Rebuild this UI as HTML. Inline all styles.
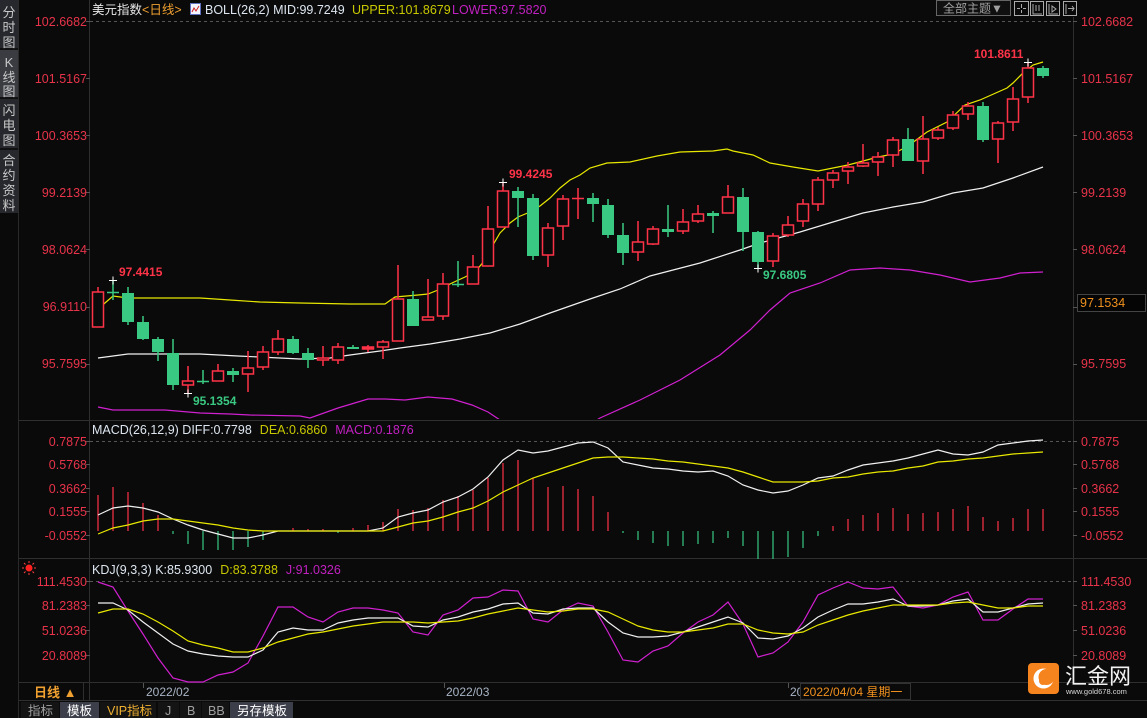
<!DOCTYPE html>
<html><head><meta charset="utf-8"><style>
html,body{margin:0;padding:0;background:#0a0a0a;width:1147px;height:718px;overflow:hidden}
svg{display:block}
text{font-family:"Liberation Sans","Noto Sans CJK SC",sans-serif}
</style></head><body>
<svg width="1147" height="718" viewBox="0 0 1147 718" xmlns="http://www.w3.org/2000/svg">
<defs>
<clipPath id="cm"><rect x="90" y="17" width="983" height="402"/></clipPath>
</defs>
<rect width="1147" height="718" fill="#0a0a0a"/>
<!-- sidebar -->
<rect x="0" y="0" width="18" height="213" fill="#26282d"/>
<rect x="0" y="50" width="18" height="47" fill="#3a3c42"/>
<rect x="0" y="48" width="18" height="2" fill="#111"/>
<rect x="0" y="97" width="18" height="2" fill="#111"/>
<rect x="0" y="148" width="18" height="2" fill="#111"/>
<rect x="18" y="0" width="1" height="718" fill="#2a2a2a"/>
<g fill="#c8c8c8" font-size="13" text-anchor="middle">
<text x="9" y="17">分</text><text x="9" y="32">时</text><text x="9" y="47">图</text>
<text x="9" y="67">K</text><text x="9" y="82">线</text><text x="9" y="96">图</text>
<text x="9" y="115">闪</text><text x="9" y="130">电</text><text x="9" y="145">图</text>
<text x="9" y="165">合</text><text x="9" y="180">约</text><text x="9" y="195">资</text><text x="9" y="210">料</text>
</g>
<!-- axes -->
<line x1="89.5" y1="0" x2="89.5" y2="700" stroke="#2f2f2f"/>
<line x1="1073.5" y1="17" x2="1073.5" y2="683" stroke="#2f2f2f"/>
<line x1="19" y1="420.5" x2="1147" y2="420.5" stroke="#2f2f2f"/>
<line x1="19" y1="558.5" x2="1147" y2="558.5" stroke="#2f2f2f"/>
<line x1="19" y1="682.5" x2="1147" y2="682.5" stroke="#2f2f2f"/>
<line x1="19" y1="700.5" x2="1147" y2="700.5" stroke="#2f2f2f"/>
<g stroke="#555" stroke-dasharray="3,3">
<line x1="90" y1="21.5" x2="1073" y2="21.5"/>
<line x1="90" y1="441.5" x2="1073" y2="441.5"/>
<line x1="90" y1="581.5" x2="1073" y2="581.5"/>
</g>
<g stroke="#555">
<path d="M86 21.5h4M86 78.5h4M86 135.5h4M86 192.5h4M86 249.5h4M86 307.5h4M86 364.5h4M86 441.5h4M86 464.5h4M86 488.5h4M86 511.5h4M86 535.5h4M86 581.5h4M86 605.5h4M86 630.5h4M86 655.5h4"/>
<path d="M1073 21.5h4M1073 78.5h4M1073 135.5h4M1073 192.5h4M1073 249.5h4M1073 307.5h4M1073 364.5h4M1073 441.5h4M1073 464.5h4M1073 488.5h4M1073 511.5h4M1073 535.5h4M1073 581.5h4M1073 605.5h4M1073 630.5h4M1073 655.5h4"/>
</g>
<!-- axis labels -->
<g fill="#e8334a" font-size="12.5">
<g text-anchor="end">
<text x="87" y="26">102.6682</text><text x="87" y="83">101.5167</text><text x="87" y="140">100.3653</text><text x="87" y="197">99.2139</text><text x="87" y="254">98.0624</text><text x="87" y="311">96.9110</text><text x="87" y="368">95.7595</text>
<text x="87" y="446">0.7875</text><text x="87" y="469">0.5768</text><text x="87" y="493">0.3662</text><text x="87" y="516">0.1555</text><text x="87" y="540">-0.0552</text>
<text x="87" y="586">111.4530</text><text x="87" y="610">81.2383</text><text x="87" y="635">51.0236</text><text x="87" y="660">20.8089</text>
</g>
<text x="1081" y="26">102.6682</text><text x="1081" y="83">101.5167</text><text x="1081" y="140">100.3653</text><text x="1081" y="197">99.2139</text><text x="1081" y="254">98.0624</text><text x="1081" y="368">95.7595</text>
<text x="1081" y="446">0.7875</text><text x="1081" y="469">0.5768</text><text x="1081" y="493">0.3662</text><text x="1081" y="516">0.1555</text><text x="1081" y="540">-0.0552</text>
<text x="1081" y="586">111.4530</text><text x="1081" y="610">81.2383</text><text x="1081" y="635">51.0236</text><text x="1081" y="660">20.8089</text>
</g>
<rect x="1077.5" y="294.5" width="68" height="17" fill="#050505" stroke="#444"/>
<text x="1080" y="307" fill="#f0901e" font-size="12.5">97.1534</text>
<!-- header -->
<text x="92" y="14" font-size="12.5"><tspan fill="#e8e8e8">美元指数</tspan><tspan fill="#f0a030">&lt;日线&gt;</tspan></text>
<rect x="190.5" y="3.5" width="10" height="11" fill="#f4f4ff" stroke="#6070c0"/>
<path d="M192 12l2-4 2 3 3-5" stroke="#d02020" fill="none" stroke-width="1"/>
<text x="205" y="14" font-size="12.5" fill="#dde6f0">BOLL(26,2) MID:99.7249</text>
<text x="352" y="14" font-size="12.5" fill="#c8c800">UPPER:101.8679</text>
<text x="452" y="14" font-size="12.5" fill="#c020c0">LOWER:97.5820</text>
<rect x="936.5" y="0.5" width="74" height="15" fill="#101010" stroke="#666"/>
<text x="943" y="12.5" fill="#a0a0a0" font-size="12">全部主题▼</text>
<g fill="none" stroke="#aaa">
<rect x="1014.5" y="1.5" width="14" height="14"/><path d="M1021.5 4v4M1021.5 10v3M1017 8.5h3M1023 8.5h3"/>
<rect x="1030.5" y="1.5" width="13" height="14"/><path d="M1033 4v10h9M1036 5v6M1039 5v6"/>
<rect x="1046.5" y="1.5" width="13" height="14"/><path d="M1049 4v10h9M1052 6l4 3-4 3z"/>
<rect x="1063.5" y="1.5" width="13" height="14"/><path d="M1066 4v10M1068 8.5h6M1072 6l2 2.5-2 2.5"/>
</g>
<!-- main chart -->
<g clip-path="url(#cm)" fill="none" stroke-width="1.2">
<polyline stroke="#e8e800" points="98,309 113,296 128,298 200,298 230,300 260,302 300,303 350,304 385,304 395,297 418,295 428,294 438,290 452,283 465,277 475,272 485,260 490,250 500,233 510,223 518,217 530,212 540,206 550,198 560,188 570,180 580,175 590,168 607,163 630,162 657,156 680,152 713,151 727,149 733,151 753,155 770,163 793,167 818,171 833,168 848,165 863,161 878,157 893,154 908,146 927,132 947,122 965,105 980,100 1007,88 1013,83 1023,73 1033,65 1043,62"/>
<polyline stroke="#f0f0f0" points="98,358 113,356 128,354 200,354 238,356 300,359 330,358 350,355 380,351 400,348 430,344 460,339 490,333 520,324 550,313 590,299 620,289 650,276 700,263 740,250 760,243 800,232 833,222 863,213 893,207 923,202 953,193 983,188 1013,178 1043,167"/>
<polyline stroke="#d020d0" points="98,407 113,410 165,410 200,413 230,414 250,415 300,416 310,418 338,408 368,399 385,399 405,400 428,397 452,399 472,405 488,412 500,420 520,428 560,432 590,424 600,418 640,400 680,380 720,355 750,330 770,310 790,293 820,283 850,270 880,268 910,270 940,275 970,282 1000,278 1020,273 1043,272"/>
</g>
<!-- candles red -->
<g stroke="#ff3348" stroke-width="1.5" fill="#0a0a0a">
<path d="M98 287V327M188 366V394M218 364V381M248 351V392M263 346V370M278 330V355M323 346V366M338 343V364M368 345V352M383 340V359M398 265V341M428 279V320M443 273V320M473 255V284M488 206V266M503 182V227M548 223V267M563 195V240M578 188V219M638 221V261M653 226V245M683 209V234M698 205V223M728 185V213M773 233V267M788 216V237M803 199V227M818 177V211M833 170V188M848 162V184M863 144V167M878 152V176M893 137V167M923 116V174M938 127V140M953 111V130M968 102V120M998 121V163M1013 87V131M1028 62V103"/>
<rect x="92.5" y="292" width="11" height="35"/>
<rect x="182.5" y="381" width="11" height="4"/>
<rect x="212.5" y="371" width="11" height="10"/>
<rect x="242.5" y="368" width="11" height="6"/>
<rect x="257.5" y="352" width="11" height="15"/>
<rect x="272.5" y="339" width="11" height="13"/>
<rect x="317.5" y="358" width="11" height="2"/>
<rect x="332.5" y="347" width="11" height="13"/>
<rect x="362.5" y="347" width="11" height="2" fill="#ff3348"/>
<rect x="377.5" y="342" width="11" height="5"/>
<rect x="392.5" y="299" width="11" height="42"/>
<rect x="422.5" y="317" width="11" height="3"/>
<rect x="437.5" y="284" width="11" height="32"/>
<rect x="467.5" y="267" width="11" height="17"/>
<rect x="482.5" y="229" width="11" height="37"/>
<rect x="497.5" y="191" width="11" height="36"/>
<rect x="542.5" y="228" width="11" height="27"/>
<rect x="557.5" y="199" width="11" height="27"/>
<path d="M572 198.5h12"/>
<rect x="632.5" y="242" width="11" height="10"/>
<rect x="647.5" y="229" width="11" height="15"/>
<rect x="677.5" y="222" width="11" height="9"/>
<rect x="692.5" y="214" width="11" height="7"/>
<rect x="722.5" y="197" width="11" height="16"/>
<rect x="767.5" y="236" width="11" height="25"/>
<rect x="782.5" y="225" width="11" height="10"/>
<rect x="797.5" y="204" width="11" height="17"/>
<rect x="812.5" y="180" width="11" height="24"/>
<rect x="827.5" y="173" width="11" height="7"/>
<rect x="842.5" y="167" width="11" height="4"/>
<rect x="857.5" y="163" width="11" height="3"/>
<rect x="872.5" y="157" width="11" height="5"/>
<rect x="887.5" y="140" width="11" height="15"/>
<rect x="917.5" y="139" width="11" height="22"/>
<rect x="932.5" y="130" width="11" height="8"/>
<rect x="947.5" y="115" width="11" height="13"/>
<rect x="962.5" y="106" width="11" height="8"/>
<rect x="992.5" y="123" width="11" height="16"/>
<rect x="1007.5" y="99" width="11" height="23"/>
<rect x="1022.5" y="68" width="11" height="29"/>
</g>
<!-- candles green -->
<g stroke="#3ac982" stroke-width="1.5" fill="#3ac982">
<path d="M113 280V300M107 292.5h12M128 287V325M143 316V340M158 337V361M173 339V390M203 370V384M197 381.5h12M233 368V382M293 336V354M308 348V368M353 345V349M413 291V326M458 261V287M452 284.5h12M518 187V227M533 194V260M593 193V222M608 199V238M623 223V265M668 205V237M713 211V233M743 188V251M758 231V268M908 128V161M983 102V142M1043 66V78"/>
</g>
<g fill="#3ac982">
<rect x="122" y="293" width="12" height="29"/>
<rect x="137" y="322" width="12" height="17"/>
<rect x="152" y="339" width="12" height="13"/>
<rect x="167" y="353" width="12" height="32"/>
<rect x="227" y="371" width="12" height="4"/>
<rect x="287" y="339" width="12" height="14"/>
<rect x="302" y="353" width="12" height="7"/>
<rect x="347" y="347" width="12" height="2"/>
<rect x="407" y="299" width="12" height="27"/>
<rect x="512" y="191" width="12" height="7"/>
<rect x="527" y="198" width="12" height="58"/>
<rect x="587" y="198" width="12" height="6"/>
<rect x="602" y="205" width="12" height="30"/>
<rect x="617" y="235" width="12" height="18"/>
<rect x="662" y="229" width="12" height="3"/>
<rect x="707" y="213" width="12" height="3"/>
<rect x="737" y="197" width="12" height="35"/>
<rect x="752" y="232" width="12" height="30"/>
<rect x="902" y="139" width="12" height="22"/>
<rect x="977" y="106" width="12" height="34"/>
<rect x="1037" y="68" width="12" height="8"/>
</g>
<!-- markers -->
<g stroke="#fff" stroke-width="1">
<path d="M109 280.5h8M113 276.5v8M184 393.5h8M188 389.5v8M499 182.5h8M503 178.5v8M754 268.5h8M758 264.5v8M1024 62.5h8M1028 58.5v8"/>
</g>
<g font-size="12" font-weight="bold">
<text x="119" y="276" fill="#ff3348">97.4415</text>
<text x="193" y="405" fill="#3ac982">95.1354</text>
<text x="509" y="178" fill="#ff3348">99.4245</text>
<text x="763" y="279" fill="#3ac982">97.6805</text>
<text x="974" y="58" fill="#ff3348">101.8611</text>
</g>
<!-- MACD -->
<text x="92" y="434" font-size="12.5"><tspan fill="#dde6f0">MACD(26,12,9) DIFF:0.7798</tspan><tspan fill="#c8c800" dx="8">DEA:0.6860</tspan><tspan fill="#c020c0" dx="8">MACD:0.1876</tspan></text>
<g stroke="#ff3348" stroke-width="1.2">
<path d="M98 531V495M113 531V487M128 531V492M143 531V503M158 531V515M293 531V528M308 531V529M323 531V529M353 531V528M368 531V525M383 531V522M398 531V509M413 531V510M428 531V508M443 531V500M458 531V496M473 531V490M488 531V478M503 531V463M518 531V460M533 531V478M548 531V487M563 531V486M578 531V489M593 531V496M608 531V512M833 531V526M848 531V519M863 531V515M878 531V513M893 531V508M908 531V514M923 531V513M938 531V512M953 531V509M968 531V506M983 531V517M998 531V521M1013 531V518M1028 531V509M1043 531V509"/>
</g>
<g stroke="#3ac982" stroke-width="1.2">
<path d="M173 531V534M188 531V544M203 531V550M218 531V550M233 531V550M248 531V547M263 531V540M338 531V533M623 531V533M638 531V540M653 531V543M668 531V546M683 531V546M698 531V544M713 531V543M728 531V538M743 531V546M758 531V559M773 531V559M788 531V557M803 531V548M818 531V536"/>
</g>
<g fill="none" stroke-width="1.2">
<polyline stroke="#f0f0f0" points="98,515 113,508 128,506 143,508 158,512 173,519 188,525 203,530 218,534 233,538 248,538 263,535 278,531 368,531 383,528 398,517 413,513 428,510 443,502 458,497 473,489 488,477 503,460 518,450 533,453 548,451 563,447 578,443 593,442 608,448 623,462 638,465 653,468 668,469 683,471 698,472 713,471 728,476 743,485 758,490 773,493 788,491 803,485 818,478 833,476 848,470 863,465 878,463 893,461 908,458 923,454 938,450 953,454 968,455 983,452 998,445 1013,443 1028,441 1043,440"/>
<polyline stroke="#e8e800" points="98,534 113,528 128,525 143,521 158,519 173,519 188,521 203,523 218,525 233,528 248,530 263,531 383,531 398,527 413,523 428,521 443,517 458,512 473,508 488,501 503,492 518,485 533,478 548,473 563,468 578,463 593,458 608,457 623,457 638,458 653,459 668,461 683,462 698,464 713,466 728,468 743,472 758,477 773,482 788,482 803,482 818,481 833,478 848,477 863,474 878,472 893,471 908,468 923,466 938,462 953,461 968,459 983,458 998,456 1013,454 1028,453 1043,452"/>
</g>
<!-- KDJ -->
<circle cx="29" cy="568" r="3.5" fill="#ff2020"/>
<g stroke="#ff4040" stroke-width="1"><path d="M29 561v2M29 573v2M22 568h2M34 568h2M24 563l1.5 1.5M34 563l-1.5 1.5M24 573l1.5-1.5M34 573l-1.5-1.5"/></g>
<text x="92" y="574" font-size="12.5"><tspan fill="#dde6f0">KDJ(9,3,3) K:85.9300</tspan><tspan fill="#c8c800" dx="8">D:83.3788</tspan><tspan fill="#c020c0" dx="8">J:91.0326</tspan></text>
<g fill="none" stroke-width="1.2">
<polyline stroke="#d020d0" points="98,582 113,587 128,611 143,634 158,658 173,678 188,682 203,682 218,675 233,672 248,663 263,636 278,607 293,607 308,617 323,622 338,612 353,608 368,608 383,610 398,613 413,632 428,635 443,615 458,610 473,598 488,597 503,590 518,591 533,619 548,622 563,610 578,603 593,606 608,632 623,660 638,662 653,651 668,646 683,633 698,622 713,615 728,602 743,624 758,657 773,653 788,642 803,622 818,595 833,588 848,582 863,588 878,589 893,587 908,606 923,608 938,605 953,597 968,592 983,620 998,620 1013,609 1028,599 1043,599"/>
<polyline stroke="#f0f0f0" points="98,603 113,603 128,610 143,622 158,633 173,644 188,651 203,654 218,656 233,657 248,657 263,650 278,632 293,628 308,630 323,630 338,623 353,620 368,618 383,618 398,618 413,626 428,627 443,620 458,617 473,612 488,609 503,604 518,603 533,613 548,614 563,609 578,608 593,608 608,622 623,633 638,637 653,637 668,636 683,632 698,627 713,622 728,617 743,623 758,638 773,639 788,636 803,628 818,617 833,610 848,604 863,604 878,602 893,599 908,606 923,606 938,605 953,601 968,599 983,612 998,612 1013,608 1028,604 1043,603"/>
<polyline stroke="#e8e800" points="98,613 113,609 128,609 143,614 158,622 173,631 188,641 203,645 218,648 233,652 248,652 263,648 278,642 293,638 308,634 323,632 338,629 353,626 368,624 383,622 398,622 413,622 428,623 443,622 458,621 473,618 488,614 503,611 518,608 533,610 548,612 563,611 578,609 593,609 608,612 623,619 638,626 653,630 668,632 683,632 698,630 713,628 728,624 743,624 758,630 773,633 788,634 803,632 818,625 833,620 848,615 863,611 878,608 893,605 908,605 923,605 938,605 953,603 968,602 983,605 998,608 1013,608 1028,606 1043,606"/>
</g>
<!-- date row -->
<line x1="83.5" y1="683" x2="83.5" y2="700" stroke="#2f2f2f"/>
<text x="34" y="697" fill="#f0a030" font-size="13" font-weight="bold">日线 ▲</text>
<line x1="143.5" y1="683" x2="143.5" y2="688" stroke="#555"/>
<line x1="444.5" y1="683" x2="444.5" y2="688" stroke="#555"/>
<line x1="788.5" y1="683" x2="788.5" y2="688" stroke="#555"/>
<g fill="#a8b4c4" font-size="12">
<text x="146" y="696">2022/02</text>
<text x="446" y="696">2022/03</text>
<text x="790" y="696">20</text>
</g>
<rect x="800.5" y="683.5" width="110" height="16" fill="#0a0a0a" stroke="#333"/>
<text x="803" y="696" fill="#f0901e" font-size="12">2022/04/04 星期一</text>
<!-- logo -->
<rect x="1028" y="663" width="31" height="31" rx="4" fill="#f5841f"/>
<circle cx="1043.5" cy="678.5" r="10" fill="#fff"/>
<circle cx="1046.5" cy="677" r="8" fill="#f5841f"/>
<circle cx="1043" cy="681" r="4" fill="#f5841f"/>
<text x="1065" y="684" fill="#f2f2f2" font-size="22">汇金网</text>
<text x="1066" y="694" fill="#d8d8d8" font-size="7.5">www.gold678.com</text>
<!-- tabs -->
<rect x="19" y="701" width="1128" height="17" fill="#0a0a0a"/>
<rect x="21" y="702" width="38" height="16" fill="#141414"/>
<rect x="60" y="702" width="39" height="16" fill="#3c3f4a"/>
<rect x="100" y="702" width="56" height="16" fill="#141414"/>
<rect x="158" y="702" width="21" height="16" fill="#141414"/>
<rect x="180" y="702" width="21" height="16" fill="#141414"/>
<rect x="202" y="702" width="27" height="16" fill="#141414"/>
<rect x="230" y="702" width="63" height="16" fill="#3c3f4a"/>
<g font-size="12.5">
<text x="28" y="715" fill="#a0a0a0">指标</text>
<text x="67" y="715" fill="#ffffff">模板</text>
<text x="107" y="715" fill="#f0b030">VIP指标</text>
<text x="165" y="715" fill="#a0a0a0">J</text>
<text x="187" y="715" fill="#a0a0a0">B</text>
<text x="208" y="715" fill="#a0a0a0">BB</text>
<text x="237" y="715" fill="#ffffff">另存模板</text>
</g>
</svg>
</body></html>
